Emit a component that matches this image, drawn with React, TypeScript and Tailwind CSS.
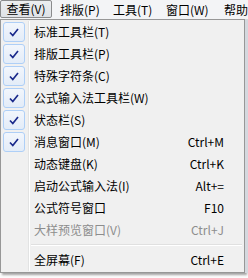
import React from 'react';

type Item = {
  label: string;
  shortcut?: string;
  checked?: boolean;
  disabled?: boolean;
  separator?: boolean;
};

const items: Item[] = [
  { label: '标准工具栏(T)', checked: true },
  { label: '排版工具栏(P)', checked: true },
  { label: '特殊字符条(C)', checked: true },
  { label: '公式输入法工具栏(W)', checked: true },
  { label: '状态栏(S)', checked: true },
  { label: '消息窗口(M)', shortcut: 'Ctrl+M', checked: true },
  { label: '动态键盘(K)', shortcut: 'Ctrl+K' },
  { label: '启动公式输入法(I)', shortcut: 'Alt+=' },
  { label: '公式符号窗口', shortcut: 'F10' },
  { label: '大样预览窗口(V)', shortcut: 'Ctrl+J', disabled: true },
  { label: '', separator: true },
  { label: '全屏幕(F)', shortcut: 'Ctrl+E' },
];

const topMenus = [
  { label: '排版(P)', w: 'w-[53px]' },
  { label: '工具(T)', w: 'w-[53px]' },
  { label: '窗口(W)', w: 'w-[58px]' },
  { label: '帮助', w: 'w-[40px]' },
];

const CheckMark = () => (
  <svg width="10" height="9" viewBox="0 0 10 9" className="block">
    <path d="M1 4.5 L3.8 7.5 L9 1" fill="none" stroke="#1a2a8c" strokeWidth="1.7" />
  </svg>
);

const App: React.FC = () => {
  return (
    <div
      className="w-[248px] h-[278px] bg-[#fbfbfb] overflow-hidden text-[12px] text-black leading-none"
      style={{ fontFamily: '"Segoe UI", "Noto Sans CJK SC", sans-serif' }}
    >
      {/* Menu bar */}
      <div className="h-[19px] flex items-stretch bg-[#f3f4f6] whitespace-nowrap">
        <div className="w-[52px] h-[18px] shrink-0 flex items-center justify-center border border-[#8a8b8c] rounded-[2px] bg-gradient-to-b from-[#eceef0] to-[#dfe2e6]">
          查看(V)
        </div>
        <div className="w-px shrink-0" />
        {topMenus.map((m) => (
          <div key={m.label} className={`${m.w} shrink-0 flex items-center pl-[7px]`}>
            {m.label}
          </div>
        ))}
      </div>

      {/* Dropdown */}
      <div className="flex">
        <div className="w-[245px] border border-[#979797] bg-[#f0f0f0] py-[1px] px-[1px] shadow-[2px_2px_2px_rgba(0,0,0,0.35)]">
          {items.map((it, i) =>
            it.separator ? (
              <div key={i} className="flex h-[8px]">
                <div className="w-[27px] shrink-0 border-r border-[#e2e3e3]" />
                <div className="w-px bg-white" />
                <div className="flex-1 flex flex-col justify-center pl-[1px] pr-[1px]">
                  <div className="h-px bg-[#e0e0e0]" />
                  <div className="h-px bg-white" />
                </div>
              </div>
            ) : (
              <div key={i} className="flex h-[22px]">
                <div className="w-[27px] shrink-0 border-r border-[#e2e3e3] flex items-center pl-[1px]">
                  {it.checked && (
                    <div className="w-[22px] h-[20px] rounded-[3px] border border-[#aecff7] bg-gradient-to-b from-[#f2f6fc] to-[#e3ecf8] flex items-center justify-center">
                      <CheckMark />
                    </div>
                  )}
                </div>
                <div className="w-px bg-white" />
                <div
                  className={`flex-1 flex items-center justify-between pl-[4px] pr-[19px] ${
                    it.disabled ? 'text-[#8d8d8d]' : 'text-black'
                  }`}
                >
                  <span>{it.label}</span>
                  {it.shortcut && <span>{it.shortcut}</span>}
                </div>
              </div>
            )
          )}
        </div>
        <div className="flex-1 bg-[#d4d8de]" />
      </div>
    </div>
  );
};

export default App;
